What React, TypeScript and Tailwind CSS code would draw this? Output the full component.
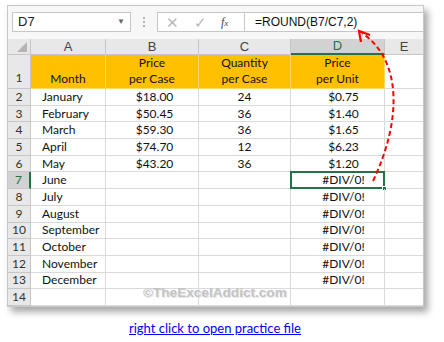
import React from 'react';

const rows = [
  { m: 'January', p: '$18.00', q: '24', u: '$0.75' },
  { m: 'February', p: '$50.45', q: '36', u: '$1.40' },
  { m: 'March', p: '$59.30', q: '36', u: '$1.65' },
  { m: 'April', p: '$74.70', q: '12', u: '$6.23' },
  { m: 'May', p: '$43.20', q: '36', u: '$1.20' },
  { m: 'June', p: '', q: '', u: '#DIV/0!' },
  { m: 'July', p: '', q: '', u: '#DIV/0!' },
  { m: 'August', p: '', q: '', u: '#DIV/0!' },
  { m: 'September', p: '', q: '', u: '#DIV/0!' },
  { m: 'October', p: '', q: '', u: '#DIV/0!' },
  { m: 'November', p: '', q: '', u: '#DIV/0!' },
  { m: 'December', p: '', q: '', u: '#DIV/0!' },
  { m: '', p: '', q: '', u: '' },
];

const cell = 'h-[16.7px] border-r border-b border-[#dadada] flex items-center';
const colHead =
  'h-4 border-r border-b border-[#c6c6c6] bg-[#e8e8e8] flex items-center justify-center text-[13px] text-[#444] font-["Liberation_Sans",sans-serif]';

export default function App() {
  return (
    <div className='w-[444px] h-[342px] bg-white relative overflow-hidden font-["Lato",sans-serif] text-[12px] text-[#111]'>
      <div className="ml-[7px] mt-[5px] w-[417px] bg-white border border-[#c8c8c8] shadow-[4px_5px_7px_rgba(0,0,0,0.35)]">
        {/* formula bar */}
        <div className="h-[33px] bg-[#f7f7f7] flex items-start pt-[6px] font-['Liberation_Sans',sans-serif]">
          <div className="ml-[4px] w-[119px] h-[20px] bg-white border border-[#c6c6c6] flex items-center justify-between pl-[5px] pr-[5px]">
            <span className="text-[13px] text-[#222]">D7</span>
            <span className="text-[8px] text-[#666]">▼</span>
          </div>
          <div className="w-[26px] h-[20px] flex flex-col items-center justify-center gap-[2px]">
            <span className="w-[2px] h-[2px] bg-[#b0b0b0]" />
            <span className="w-[2px] h-[2px] bg-[#b0b0b0]" />
            <span className="w-[2px] h-[2px] bg-[#b0b0b0]" />
          </div>
          <div className="w-[88px] h-[20px] bg-white border border-[#c6c6c6] flex items-center">
            <span className="ml-[8px] w-[12px] text-[15px] leading-none text-[#b8b8b8]">✕</span>
            <span className="ml-[16px] w-[14px] text-[15px] leading-none text-[#b8b8b8]">✓</span>
            <span className="ml-[13px] font-['Liberation_Serif',serif] italic text-[12px] text-[#444]">
              f<span className="text-[9px]">x</span>
            </span>
          </div>
          <div className="flex-1 h-[20px] bg-white border-y border-[#c6c6c6] flex items-center pl-[10px] text-[12px] text-[#111]">
            =ROUND(B7/C7,2)
          </div>
        </div>

        {/* grid */}
        <div className="grid grid-cols-[23px_75px_93px_92px_94px_38px]">
          <div className="h-4 border-r border-b border-[#c6c6c6] bg-[#e8e8e8] flex items-end justify-end pr-[3px] pb-[2px]">
            <svg width="10" height="10" viewBox="0 0 10 10">
              <polygon points="10,0 10,10 0,10" fill="#b4b4b4" />
            </svg>
          </div>
          <div className={colHead}>A</div>
          <div className={colHead}>B</div>
          <div className={colHead}>C</div>
          <div className="h-4 border-r border-b-2 border-r-[#c6c6c6] border-b-[#217346] bg-[#d2d2d2] flex items-center justify-center text-[13px] text-[#217346] font-['Liberation_Sans',sans-serif]">
            D
          </div>
          <div className="h-4 border-b border-[#c6c6c6] bg-[#e8e8e8] flex items-center justify-center text-[13px] text-[#444] font-['Liberation_Sans',sans-serif]">
            E
          </div>

          {/* header row 1 */}
          <div className="h-[34px] border-r border-b border-[#c6c6c6] bg-[#e8e8e8] flex items-end justify-center pb-[1px] text-[12px] text-[#333]">
            1
          </div>
          <div className="h-[34px] border-r border-b border-[#ffd966] bg-[#ffc000] flex items-end justify-center pb-[1px] leading-[16px]">
            Month
          </div>
          <div className="h-[34px] border-r border-b border-[#ffd966] bg-[#ffc000] flex flex-col items-center justify-end pb-[1px] leading-[16px]">
            <span>Price</span>
            <span>per Case</span>
          </div>
          <div className="h-[34px] border-r border-b border-[#ffd966] bg-[#ffc000] flex flex-col items-center justify-end pb-[1px] leading-[16px]">
            <span>Quantity</span>
            <span>per Case</span>
          </div>
          <div className="h-[34px] border-r border-b border-[#ffd966] bg-[#ffc000] flex flex-col items-center justify-end pb-[1px] leading-[16px]">
            <span>Price</span>
            <span>per Unit</span>
          </div>
          <div className="h-[34px] border-b border-[#dadada]" />

          {rows.map((r, i) => {
            const n = i + 2;
            const sel = n === 7;
            return (
              <React.Fragment key={n}>
                <div
                  className={
                    sel
                      ? 'h-[16.7px] border-b border-[#c6c6c6] border-r-2 border-r-[#217346] bg-[#d2d2d2] flex items-center justify-center text-[12px] text-[#217346]'
                      : 'h-[16.7px] border-r border-b border-[#c6c6c6] bg-[#e8e8e8] flex items-center justify-center text-[12px] text-[#333]'
                  }
                >
                  {n}
                </div>
                <div className={cell + ' pl-[11px]'}>{r.m}</div>
                <div className={cell + ' justify-center pl-[5px]'}>{r.p}</div>
                <div className={cell + ' justify-center'}>{r.q}</div>
                <div className={cell + ' justify-center pl-[12px] relative'}>
                  {r.u}
                  {sel && (
                    <>
                      <div className="absolute -top-[1px] -left-[1px] right-[-1px] bottom-[-1px] border-2 border-[#217346]" />
                      <div className="absolute right-[-3px] bottom-[-3px] w-[5px] h-[5px] bg-[#217346] border border-white" />
                    </>
                  )}
                </div>
                <div className="h-[16.7px] border-b border-[#dadada]" />
              </React.Fragment>
            );
          })}
        </div>
      </div>

      {/* watermark */}
      <div className="absolute left-[143px] top-[283px] font-['Liberation_Sans',sans-serif] font-bold text-[13.6px] text-[#c4c4c4] [text-shadow:1px_1px_0_#e6e6e6]">
        ©TheExcelAddict.com
      </div>

      {/* arrow */}
      <svg className="absolute left-0 top-0" width="444" height="342" viewBox="0 0 444 342">
        <path
          d="M373 181 C402 120 402 60 362 33"
          fill="none"
          stroke="#ff0000"
          strokeWidth="2"
          strokeDasharray="5 3"
        />
        <polyline points="361,42 359,31 370,35" fill="none" stroke="#ff0000" strokeWidth="2.2" />
      </svg>

      <div className="absolute left-0 right-0 top-[319px] flex justify-center pr-[14px]">
        <a href="#" className='text-[13px] text-[#0000ff] underline font-["Lato",sans-serif]'>
          right click to open practice file
        </a>
      </div>
    </div>
  );
}
